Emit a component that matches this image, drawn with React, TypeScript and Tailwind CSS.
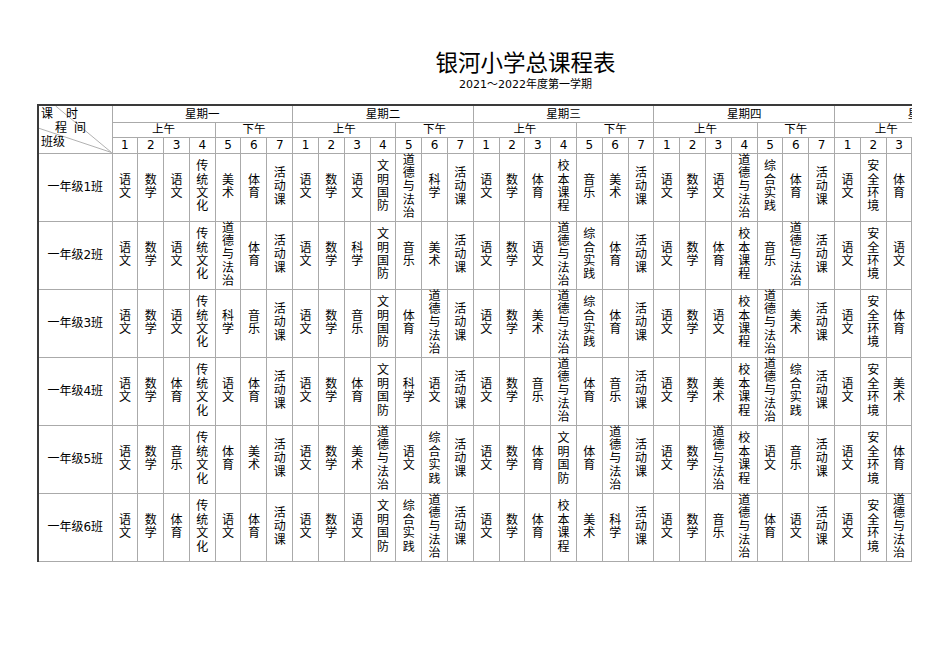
import React from 'react';

const FONT = '"DejaVu Sans", "Noto Sans CJK SC", sans-serif';

const days = ['星期一', '星期二', '星期三', '星期四', '星期五'];

// 每行 35 节课（周一到周五，每天 7 节），周五只看得到前 3 节
const rows: { name: string; lessons: string[] }[] = [
  {
    name: '一年级1班',
    lessons: [
      '语文', '数学', '语文', '传统文化', '美术', '体育', '活动课',
      '语文', '数学', '语文', '文明国防', '道德与法治', '科学', '活动课',
      '语文', '数学', '体育', '校本课程', '音乐', '美术', '活动课',
      '语文', '数学', '语文', '道德与法治', '综合实践', '体育', '活动课',
      '语文', '安全环境', '体育', '', '', '', '',
    ],
  },
  {
    name: '一年级2班',
    lessons: [
      '语文', '数学', '语文', '传统文化', '道德与法治', '体育', '活动课',
      '语文', '数学', '科学', '文明国防', '音乐', '美术', '活动课',
      '语文', '数学', '语文', '道德与法治', '综合实践', '体育', '活动课',
      '语文', '数学', '体育', '校本课程', '音乐', '道德与法治', '活动课',
      '语文', '安全环境', '语文', '', '', '', '',
    ],
  },
  {
    name: '一年级3班',
    lessons: [
      '语文', '数学', '语文', '传统文化', '科学', '音乐', '活动课',
      '语文', '数学', '音乐', '文明国防', '体育', '道德与法治', '活动课',
      '语文', '数学', '美术', '道德与法治', '综合实践', '体育', '活动课',
      '语文', '数学', '语文', '校本课程', '道德与法治', '美术', '活动课',
      '语文', '安全环境', '体育', '', '', '', '',
    ],
  },
  {
    name: '一年级4班',
    lessons: [
      '语文', '数学', '体育', '传统文化', '语文', '体育', '活动课',
      '语文', '数学', '体育', '文明国防', '科学', '语文', '活动课',
      '语文', '数学', '音乐', '道德与法治', '体育', '音乐', '活动课',
      '语文', '数学', '美术', '校本课程', '道德与法治', '综合实践', '活动课',
      '语文', '安全环境', '美术', '', '', '', '',
    ],
  },
  {
    name: '一年级5班',
    lessons: [
      '语文', '数学', '音乐', '传统文化', '体育', '美术', '活动课',
      '语文', '数学', '美术', '道德与法治', '语文', '综合实践', '活动课',
      '语文', '数学', '体育', '文明国防', '体育', '道德与法治', '活动课',
      '语文', '数学', '道德与法治', '校本课程', '语文', '音乐', '活动课',
      '语文', '安全环境', '体育', '', '', '', '',
    ],
  },
  {
    name: '一年级6班',
    lessons: [
      '语文', '数学', '体育', '传统文化', '语文', '体育', '活动课',
      '语文', '数学', '语文', '文明国防', '综合实践', '道德与法治', '活动课',
      '语文', '数学', '体育', '校本课程', '美术', '科学', '活动课',
      '语文', '数学', '音乐', '道德与法治', '体育', '语文', '活动课',
      '语文', '安全环境', '道德与法治', '', '', '', '',
    ],
  },
];

const cell = 'border border-[#aaaaaa] p-0 text-center align-middle';

function Vertical({ text }: { text: string }) {
  return (
    <div className="flex flex-col items-center text-[12px] leading-[13.4px] text-black">
      {text.split('').map((ch, i) => (
        <span key={i}>{ch}</span>
      ))}
    </div>
  );
}

export default function App() {
  return (
    <div className="min-h-screen bg-white" style={{ fontFamily: FONT }}>
      <div className="ml-[37px] w-[875px] overflow-hidden pt-[48px]">
        <div className="w-[977px]">
          <div className="flex flex-col items-center">
            <h1 className="text-[22.5px] leading-[30px] text-black">银河小学总课程表</h1>
            <p className="text-[11px] leading-[14px] text-black">2021～2022年度第一学期</p>
          </div>
          <table className="mt-[12px] w-[977px] table-fixed border-collapse border-t-2 border-l-2 border-t-[#3a3a3a] border-l-[#3a3a3a]">
            <colgroup>
              <col className="w-[74px]" />
              {Array.from({ length: 35 }).map((_, i) => (
                <col key={i} className="w-[25.8px]" />
              ))}
            </colgroup>
            <thead>
              <tr className="h-[17px]">
                <td rowSpan={3} className={`${cell} relative text-left align-top`}>
                  <svg className="absolute inset-0 h-full w-full" viewBox="0 0 74 48" preserveAspectRatio="none">
                    <line x1="17" y1="0" x2="74" y2="48" stroke="#9a9a9a" strokeWidth="0.8" />
                    <line x1="0" y1="23" x2="74" y2="48" stroke="#9a9a9a" strokeWidth="0.8" />
                  </svg>
                  <div className="relative flex flex-col pt-[1px] text-[12px] leading-[14px] text-black">
                    <div className="pl-[2px]">课<span className="ml-[13px]">时</span></div>
                    <div className="pl-[16px]">程<span className="ml-[7px]">间</span></div>
                    <div className="pl-[2px]">班级</div>
                  </div>
                </td>
                {days.map((d) => (
                  <td key={d} colSpan={7} className={`${cell} text-[11.5px] leading-[14px] text-black`}>
                    {d}
                  </td>
                ))}
              </tr>
              <tr className="h-[15px]">
                {days.map((d) => (
                  <React.Fragment key={d}>
                    <td colSpan={4} className={`${cell} text-[11.5px] leading-[13px] text-black`}>上午</td>
                    <td colSpan={3} className={`${cell} text-[11.5px] leading-[13px] text-black`}>下午</td>
                  </React.Fragment>
                ))}
              </tr>
              <tr className="h-[16px]">
                {days.map((d) => (
                  <React.Fragment key={d}>
                    {[1, 2, 3, 4, 5, 6, 7].map((n) => (
                      <td key={n} className={`${cell} text-[12px] leading-[14px] text-black`}>
                        {n}
                      </td>
                    ))}
                  </React.Fragment>
                ))}
              </tr>
            </thead>
            <tbody>
              {rows.map((r) => (
                <tr key={r.name} className="h-[68px]">
                  <td className={`${cell} text-[12px] text-black`}>{r.name}</td>
                  {r.lessons.map((l, i) => (
                    <td key={i} className={cell}>
                      <Vertical text={l} />
                    </td>
                  ))}
                </tr>
              ))}
            </tbody>
          </table>
        </div>
      </div>
    </div>
  );
}
